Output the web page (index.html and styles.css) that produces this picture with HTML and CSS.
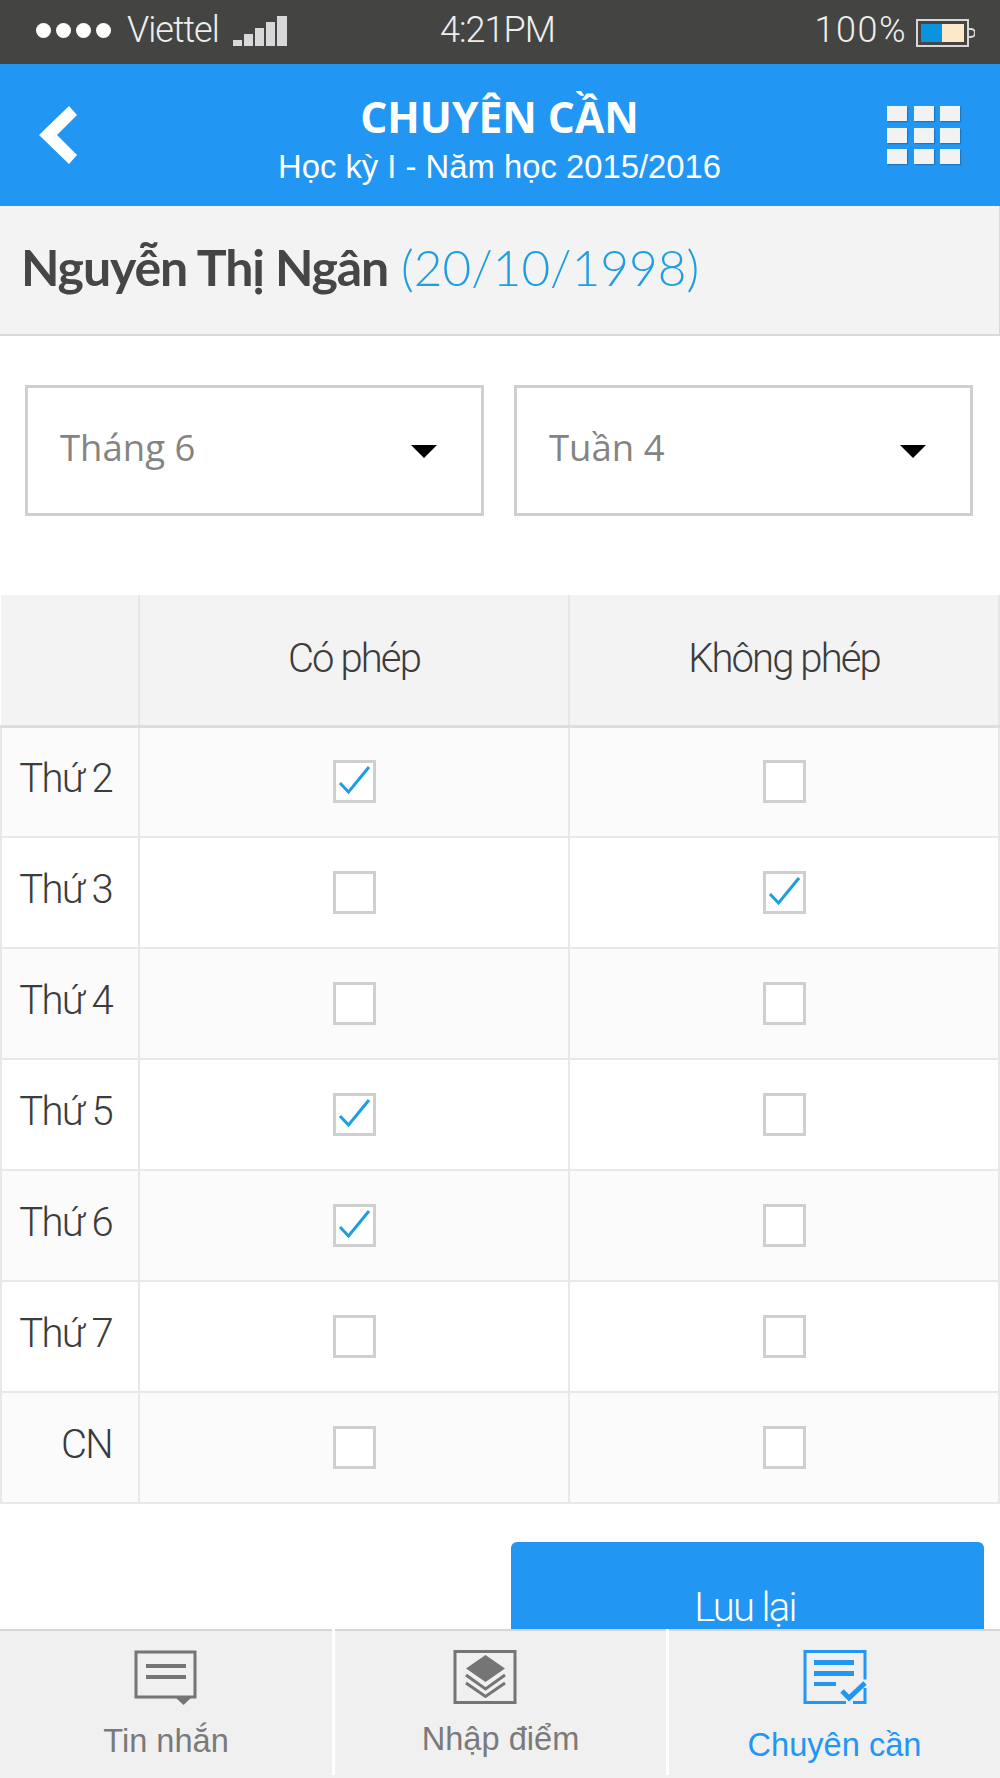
FILE: index.html
```html
<!DOCTYPE html>
<html lang="vi">
<head>
    <meta charset="UTF-8">
    <meta name="viewport" content="width=device-width, initial-scale=1.0">
    <title>Chuyên cần</title>
    <link rel="stylesheet" href="styles.css">
</head>
<body>
<div class="page">
    <div class="status-bar">
        <div class="status-left">
            <span class="dots"><i></i><i></i><i></i><i></i></span>
            <span class="carrier">Viettel</span>
            <svg class="signal" width="55" height="30" viewBox="0 0 55 30">
                <rect x="0" y="24" width="9" height="6" fill="#d8d8d8"/>
                <rect x="11" y="18" width="9" height="12" fill="#d8d8d8"/>
                <rect x="22" y="12" width="9" height="18" fill="#d8d8d8"/>
                <rect x="33" y="6" width="9" height="24" fill="#d8d8d8"/>
                <rect x="44" y="0" width="10" height="30" fill="#d8d8d8"/>
            </svg>
        </div>
        <span class="time">4:21PM</span>
        <div class="status-right">
            <span class="battery-text">100%</span>
            <svg class="battery" width="59" height="28" viewBox="0 0 59 28">
                <rect x="1" y="1" width="51" height="26" fill="none" stroke="#d8d8d8" stroke-width="2"/>
                <rect x="5" y="5" width="21" height="18" fill="#0a94e0"/>
                <rect x="26" y="5" width="22" height="18" fill="#fde8c8"/>
                <path d="M53 10h2a4 4 0 0 1 0 8h-2" fill="none" stroke="#d8d8d8" stroke-width="2"/>
            </svg>
        </div>
    </div>

    <div class="header">
        <a class="back" href="#">
            <svg width="38" height="58" viewBox="0 0 38 58"><polygon points="0,29 30,0 38,9 18,29 38,49 30,58" fill="#fff"/></svg>
        </a>
        <div class="header-title">
            <div class="title">CHUYÊN CẦN</div>
            <div class="subtitle">Học kỳ I - Năm học 2015/2016</div>
        </div>
        <div class="apps">
            <i></i><i></i><i></i><i></i><i></i><i></i><i></i><i></i><i></i>
        </div>
    </div>

    <div class="student">
        <b>Nguyễn Thị Ngân</b> <span>(20/10/1998)</span>
    </div>

    <div class="main">
        <div class="filters">
            <div class="select"><span>Tháng 6</span><i class="caret"></i></div>
            <div class="select"><span>Tuần 4</span><i class="caret"></i></div>
        </div>

        <table class="attendance">
            <colgroup><col class="col-day"><col class="col-a"><col class="col-b"></colgroup>
            <thead>
                <tr><th></th><th>Có phép</th><th>Không phép</th></tr>
            </thead>
            <tbody>
                <tr>
                    <td class="day">Thứ 2</td>
                    <td><span class="check on"><svg width="37" height="37" viewBox="0 0 37 37"><path d="M4 20l8.500 9L33 4"/></svg></span></td>
                    <td><span class="check"></span></td>
                </tr>
                <tr>
                    <td class="day">Thứ 3</td>
                    <td><span class="check"></span></td>
                    <td><span class="check on"><svg width="37" height="37" viewBox="0 0 37 37"><path d="M4 20l8.500 9L33 4"/></svg></span></td>
                </tr>
                <tr>
                    <td class="day">Thứ 4</td>
                    <td><span class="check"></span></td>
                    <td><span class="check"></span></td>
                </tr>
                <tr>
                    <td class="day">Thứ 5</td>
                    <td><span class="check on"><svg width="37" height="37" viewBox="0 0 37 37"><path d="M4 20l8.500 9L33 4"/></svg></span></td>
                    <td><span class="check"></span></td>
                </tr>
                <tr>
                    <td class="day">Thứ 6</td>
                    <td><span class="check on"><svg width="37" height="37" viewBox="0 0 37 37"><path d="M4 20l8.500 9L33 4"/></svg></span></td>
                    <td><span class="check"></span></td>
                </tr>
                <tr>
                    <td class="day">Thứ 7</td>
                    <td><span class="check"></span></td>
                    <td><span class="check"></span></td>
                </tr>
                <tr>
                    <td class="day">CN</td>
                    <td><span class="check"></span></td>
                    <td><span class="check"></span></td>
                </tr>
            </tbody>
        </table>

        <div class="actions">
            <button type="button" class="save">Luu lại</button>
        </div>
    </div>

    <div class="tabs">
        <a class="tab" href="#">
            <svg width="64" height="56" viewBox="0 0 64 56">
                <path d="M2 2h59v45H2z" fill="none" stroke="#757575" stroke-width="3"/>
                <path d="M12 14h40v4H12zM12 25h40v4H12z" fill="#757575"/>
                <path d="M41 47h17l-8.500 8z" fill="#757575"/>
            </svg>
            <span>Tin nhắn</span>
        </a>
        <a class="tab layers" href="#">
            <svg width="64" height="56" viewBox="0 0 64 56">
                <path d="M2 1.500h60v51H2z" fill="none" stroke="#757575" stroke-width="3"/>
                <path d="M32.500 5l19.500 13.500L32.500 32 13 18.500z" fill="#757575"/>
                <path d="M13 25l19.500 14L52 25M13 33l19.500 13.500L52 33" fill="none" stroke="#757575" stroke-width="3"/>
            </svg>
            <span>Nhập điểm</span>
        </a>
        <a class="tab active" href="#">
            <svg width="64" height="56" viewBox="0 0 64 56">
                <path d="M43 52.500H2V1.500h60v28M62 38v14.500H50" fill="none" stroke="#2196f3" stroke-width="3"/>
                <path d="M11 10h40v5H11zM11 21h40v5H11zM11 32h22v4H11z" fill="#2196f3"/>
                <path d="M39 41l7 7 16-15" fill="none" stroke="#2196f3" stroke-width="5"/>
            </svg>
            <span>Chuyên cần</span>
        </a>
    </div>
</div>
</body>
</html>
```
FILE: styles.css
```css
* {
    box-sizing: border-box;
}

body {
    margin: 0;
    font-family: "Liberation Sans", Arial, sans-serif;
    background-color: #fff;
}

.page {
    display: flex;
    flex-direction: column;
    height: 1778px;
    overflow: hidden;
}

/* status bar */
.status-bar {
    height: 64px;
    flex-shrink: 0;
    display: grid;
    grid-template-columns: 404px auto 1fr;
    align-items: center;
    padding: 0 25px 4px 36px;
    background-color: #444543;
    color: #eee;
    font-family: Roboto, sans-serif;
    font-weight: 300;
    font-size: 36px;
    letter-spacing: -1px;
}

.status-left {
    display: flex;
    align-items: center;
}

.dots {
    display: flex;
    gap: 5px;
    margin-right: 16px;
}

.dots i {
    width: 15px;
    height: 15px;
    border-radius: 50%;
    background-color: #fff;
}

.signal {
    margin-left: 14px;
    margin-top: 2px;
}

.status-right {
    display: flex;
    justify-content: flex-end;
    align-items: center;
    gap: 9px;
}

.battery-text {
    letter-spacing: 1.500px;
}

.battery {
    margin-top: 6px;
}

/* header */
.header {
    height: 142px;
    flex-shrink: 0;
    display: grid;
    grid-template-columns: 1fr auto 1fr;
    align-items: center;
    padding: 0 40px 0 39px;
    background-color: #2196f3;
    color: #fff;
}

.back {
    display: flex;
    margin-top: 0;
}

.header-title {
    text-align: center;
}

.title {
    font-family: "Open Sans", sans-serif;
    font-weight: 700;
    font-size: 42.500px;
    line-height: 52px;
    margin-top: 7px;
}

.subtitle {
    font-size: 32.800px;
    line-height: 38px;
    margin-top: 5px;
}

.apps {
    justify-self: end;
    display: grid;
    grid-template-columns: repeat(3, 20px);
    grid-auto-rows: 15px;
    gap: 6.500px;
}

.apps i {
    background-color: #f2f2f2;
    box-shadow: 1px 1px 1px rgba(0, 0, 0, 0.2);
}

/* student */
.student {
    height: 130px;
    flex-shrink: 0;
    padding: 28px 0 0 21px;
    background-color: #f3f3f3;
    border-bottom: 2px solid #d9d9d9;
    border-right: 1px solid #d9d9d9;
    font-family: Lato, sans-serif;
    font-size: 50px;
    line-height: 66px;
}

.student b {
    color: #464646;
    letter-spacing: -1.100px;
}

.student span {
    color: #1e9ee0;
    font-weight: 300;
    font-size: 49.500px;
}

.main {
    flex: 1;
    min-height: 0;
    overflow: hidden;
}

/* selects */
.filters {
    display: flex;
    gap: 30px;
    padding: 49px 27px 79px 25px;
}

.select {
    flex: 1;
    height: 131px;
    display: flex;
    align-items: center;
    justify-content: space-between;
    padding: 0 44px 8px 32px;
    border: 3px solid #cfcfcf;
    font-family: "Open Sans", sans-serif;
    font-size: 36.500px;
    color: #848484;
}

.caret {
    width: 0;
    height: 0;
    margin-top: 10px;
    border-left: 13px solid transparent;
    border-right: 13px solid transparent;
    border-top: 13px solid #000;
}

/* table */
.attendance {
    width: 1000px;
    table-layout: fixed;
    border-collapse: collapse;
}

.col-day {
    width: 138px;
}

.col-a {
    width: 430px;
}

.attendance th {
    height: 131px;
    padding: 0 0 2px;
    background-color: #f3f3f3;
    border-left: 2px solid #e6e6e6;
    border-right: 2px solid #e6e6e6;
    border-bottom: 3px solid #dddddd;
    font-family: Roboto, sans-serif;
    font-weight: 300;
    font-size: 40px;
    letter-spacing: -1.900px;
    color: #3c3c3c;
}

.attendance th:first-child {
    border-left: none;
}

.attendance td {
    height: 111px;
    padding: 0;
    text-align: center;
    border: 2px solid #e8e8e8;
}

.attendance tbody tr:nth-child(odd) {
    background-color: #fbfbfb;
}

.attendance .day {
    padding: 0 26px 6px 0;
    text-align: right;
    font-family: Roboto, sans-serif;
    font-weight: 300;
    font-size: 40px;
    letter-spacing: -1.700px;
    color: #3c3c3c;
}

.check {
    display: inline-flex;
    vertical-align: middle;
    width: 43px;
    height: 43px;
    background-color: #fff;
    border: 3px solid #cfcfcf;
}

.check path {
    fill: none;
    stroke: #1e9ee0;
    stroke-width: 3;
}

/* save button */
.actions {
    display: flex;
    justify-content: flex-end;
    padding: 38px 16px 0 0;
}

.save {
    width: 473px;
    height: 130px;
    padding: 0 5px 0 0;
    border: none;
    border-radius: 6px;
    background-color: #2196f3;
    color: #fff;
    font-family: Roboto, sans-serif;
    font-weight: 300;
    font-size: 40px;
    letter-spacing: -1.700px;
}

/* bottom tabs */
.tabs {
    height: 149px;
    flex-shrink: 0;
    display: grid;
    grid-template-columns: 332px 331px 1fr;
    gap: 3px;
    background: linear-gradient(#fff calc(100% - 3px), #f0f0f0 0);
}

.tab {
    display: flex;
    flex-direction: column;
    align-items: center;
    padding-top: 19px;
    background-color: #f0f0f0;
    border-top: 2px solid #d6d6d6;
    color: #7a7a7a;
    font-size: 32.600px;
    text-decoration: none;
}

.tab span {
    margin-top: 16px;
}

.tab.layers svg {
    margin-right: 32px;
}

.tab.layers span {
    margin-top: 14px;
}

.tab.active {
    color: #2196f3;
}

.tab.active span {
    margin-top: 20px;
}
```
